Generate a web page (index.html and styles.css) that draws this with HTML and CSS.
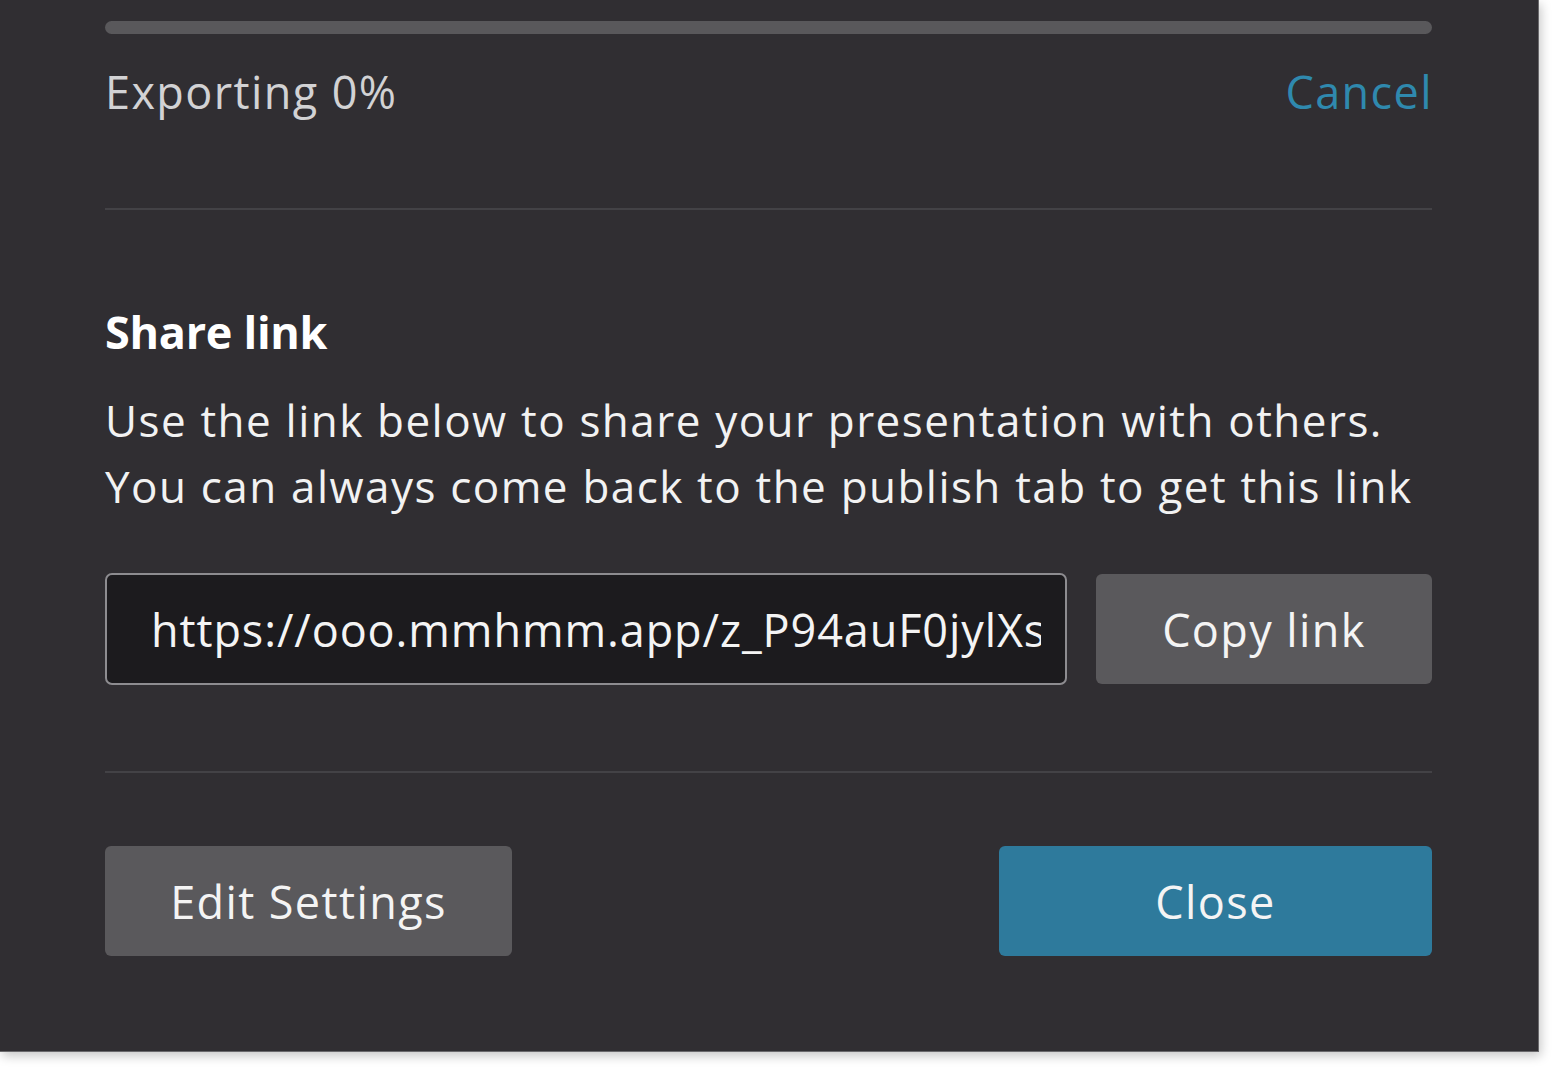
FILE: index.html
```html
<!DOCTYPE html>
<html lang="en">
<head>
<meta charset="utf-8">
<title>Share link</title>
<link rel="stylesheet" href="styles.css">
</head>
<body>
<div class="panel">
  <div class="progress"><div class="progress-fill"></div></div>
  <div class="status-row">
    <span class="status">Exporting 0%</span>
    <a class="cancel" href="#">Cancel</a>
  </div>
  <div class="divider first"></div>
  <h2 class="title">Share link</h2>
  <p class="desc">Use the link below to share your presentation with others.<br>You can always come back to the publish tab to get this link</p>
  <div class="link-row">
    <div class="link-field"><span class="link-text">https://ooo.mmhmm.app/z_P94auF0jylXsQ2</span></div>
    <button class="btn btn-gray copy">Copy link</button>
  </div>
  <div class="divider second"></div>
  <div class="footer">
    <button class="btn btn-gray edit">Edit Settings</button>
    <button class="btn btn-blue close">Close</button>
  </div>
</div>
</body>
</html>
```

FILE: styles.css
```css
html, body {
  margin: 0;
  padding: 0;
  background: #ffffff;
}
body {
  font-family: "Open Sans", "Noto Sans", sans-serif;
  width: 1560px;
  height: 1074px;
  overflow: hidden;
  letter-spacing: 1.3px;
}
.panel {
  box-sizing: border-box;
  width: 1539px;
  height: 1052px;
  background: #302e32;
  border-right: 1px solid #6a696c;
  border-bottom: 1px solid #6a696c;
  box-shadow: 2px 4px 10px rgba(0,0,0,0.22);
  padding: 21px 106px 0 105px;
  display: flex;
  flex-direction: column;
}
.progress {
  height: 13px;
  border-radius: 7px;
  background: #59585b;
}
.status-row {
  display: flex;
  justify-content: space-between;
  align-items: center;
  height: 60px;
  margin-top: 28px;
  font-size: 45px;
  line-height: 60px;
  letter-spacing: 1.4px;
}
.status { color: #d2d2d4; }
.cancel { color: #2f89ae; text-decoration: none; margin-right: -1px; }
.divider {
  height: 2px;
  background: #434246;
}
.divider.first { margin-top: 86px; }
.title {
  margin: 92px 0 0 0;
  font-size: 45px;
  line-height: 60px;
  font-weight: 700;
  color: #ffffff;
  letter-spacing: -0.3px;
}
.desc {
  margin: 25px 0 0 0;
  font-size: 44px;
  line-height: 66px;
  color: #f2f2f2;
  letter-spacing: 1.45px;
  word-spacing: 0.5px;
}
.link-row {
  display: flex;
  gap: 29px;
  margin-top: 54px;
  height: 112px;
}
.link-field {
  box-sizing: border-box;
  width: 962px;
  height: 112px;
  border: 2px solid #8d8c90;
  border-radius: 7px;
  background: #1c1b1e;
  padding: 0 24px 0 44px;
  display: flex;
  align-items: center;
  overflow: hidden;
}
.link-text {
  font-size: 45px;
  color: #f4f4f4;
  white-space: nowrap;
  overflow: hidden;
  display: block;
  width: 100%;
  letter-spacing: 0.9px;
}
.btn {
  font-family: inherit;
  border: none;
  border-radius: 6px;
  color: #f4f4f4;
  font-size: 45px;
  letter-spacing: 1.4px;
  cursor: pointer;
  padding: 0;
}
.btn-gray { background: #5a595c; }
.btn-blue { background: #2e7a9c; }
.copy {
  flex: 1;
  height: 110px;
  margin-top: 1px;
}
.divider.second { margin-top: 86px; }
.footer {
  display: flex;
  justify-content: space-between;
  margin-top: 73px;
}
.edit { width: 407px; height: 110px; }
.close { width: 433px; height: 110px; }
```
